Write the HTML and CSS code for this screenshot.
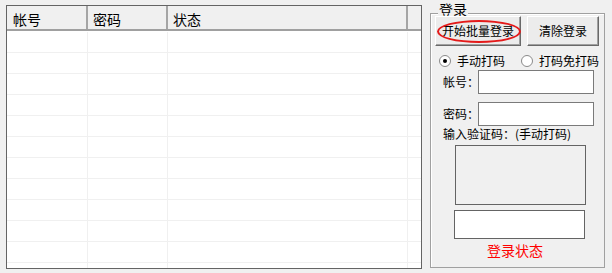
FILE: index.html
```html
<!DOCTYPE html>
<html lang="zh-CN">
<head>
    <meta charset="UTF-8">
    <title>批量登录</title>
    <link rel="stylesheet" href="styles.css">
</head>
<body>
    <div class="window">
        <div class="list">
            <div class="list-head">
                <div class="th c1">帐号</div>
                <div class="th c2">密码</div>
                <div class="th c3">状态</div>
                <div class="th c4"></div>
            </div>
            <div class="list-body">
                <div class="row"><div class="td c1"></div><div class="td c2"></div><div class="td c3"></div><div class="td c4"></div></div>
                <div class="row"><div class="td c1"></div><div class="td c2"></div><div class="td c3"></div><div class="td c4"></div></div>
                <div class="row"><div class="td c1"></div><div class="td c2"></div><div class="td c3"></div><div class="td c4"></div></div>
                <div class="row"><div class="td c1"></div><div class="td c2"></div><div class="td c3"></div><div class="td c4"></div></div>
                <div class="row"><div class="td c1"></div><div class="td c2"></div><div class="td c3"></div><div class="td c4"></div></div>
                <div class="row"><div class="td c1"></div><div class="td c2"></div><div class="td c3"></div><div class="td c4"></div></div>
                <div class="row"><div class="td c1"></div><div class="td c2"></div><div class="td c3"></div><div class="td c4"></div></div>
                <div class="row"><div class="td c1"></div><div class="td c2"></div><div class="td c3"></div><div class="td c4"></div></div>
                <div class="row"><div class="td c1"></div><div class="td c2"></div><div class="td c3"></div><div class="td c4"></div></div>
                <div class="row"><div class="td c1"></div><div class="td c2"></div><div class="td c3"></div><div class="td c4"></div></div>
                <div class="row"><div class="td c1"></div><div class="td c2"></div><div class="td c3"></div><div class="td c4"></div></div>
                <div class="row"><div class="td c1"></div><div class="td c2"></div><div class="td c3"></div><div class="td c4"></div></div>
            </div>
        </div>

        <div class="group">
            <span class="group-title">登录</span>
            <div class="btn-row">
                <button class="btn btn-start">开始批量登录<span class="mark"></span></button>
                <button class="btn btn-clear">清除登录</button>
            </div>
            <div class="radio-row">
                <span class="radio checked"></span><span class="radio-text">手动打码</span>
                <span class="radio second"></span><span class="radio-text">打码免打码</span>
            </div>
            <div class="field">
                <span class="field-label">帐号：</span>
                <div class="input"></div>
            </div>
            <div class="field">
                <span class="field-label">密码：</span>
                <div class="input"></div>
            </div>
            <div class="hint">输入验证码：(手动打码)</div>
            <div class="captcha"></div>
            <div class="status-box"></div>
            <div class="status-text">登录状态</div>
        </div>
    </div>
</body>
</html>
```

FILE: styles.css
```css
body {
    margin: 0;
    background-color: #f0f0f0;
    font-family: "Noto Sans CJK SC", "Liberation Sans", sans-serif;
    font-size: 12px;
    color: #000;
}

.window {
    display: flex;
    align-items: flex-start;
    padding: 5px 0 0 6px;
}

/* list view */
.list {
    box-sizing: border-box;
    width: 416px;
    height: 264px;
    border: 1px solid #646464;
    background-color: #fff;
    overflow: hidden;
}

.list-head {
    display: flex;
    height: 23px;
    background-color: #f0f0f0;
    border-bottom: 2px solid #a0a0a0;
}

.th {
    box-sizing: border-box;
    height: 23px;
    padding: 4px 0 0 5px;
    font-size: 14px;
    line-height: 18px;
    border-right: 2px solid #a5a5a5;
}

.th.c1 {
    padding-left: 6px;
}

.th.c4 {
    border-right: none;
}

.c1 { width: 81px; }
.c2 { width: 80px; }
.c3 { width: 240px; }
.c4 { flex: 1; }

.list-body {
    padding-top: 1px;
}

.row {
    display: flex;
    height: 21px;
    box-sizing: border-box;
    border-bottom: 1px solid #f0f0f0;
}

.td {
    box-sizing: border-box;
    height: 20px;
    border-right: 1px solid #f0f0f0;
}

.td.c4 {
    border-right: none;
}

/* login group */
.group {
    position: relative;
    box-sizing: border-box;
    width: 175px;
    height: 255px;
    margin: 8px 0 0 8px;
    padding: 2px 0 0 4px;
    border: 1px solid #a0a0a0;
    box-shadow: inset 1px 1px 0 #fff;
}

.group-title {
    position: absolute;
    top: -14px;
    left: 7px;
    padding: 0 1px;
    background-color: #f0f0f0;
    font-size: 14px;
    line-height: 18px;
}

.btn-row {
    display: flex;
    gap: 6px;
}

.btn {
    position: relative;
    box-sizing: border-box;
    height: 30px;
    padding: 0;
    font-family: inherit;
    font-size: 12px;
    line-height: 16px;
    color: #000;
    background-color: #ececec;
    border: 1px solid;
    border-color: #fff #696969 #696969 #fff;
    box-shadow: inset -1px -1px 0 #a0a0a0;
}

.btn-start {
    width: 86px;
}

.btn-clear {
    width: 72px;
}

.mark {
    position: absolute;
    top: 3px;
    left: 1px;
    width: 84px;
    height: 23px;
    box-sizing: border-box;
    border: 2px solid #e41a1a;
    border-radius: 50%;
}

.radio-row {
    display: flex;
    align-items: center;
    height: 16px;
    margin: 7px 0 0 4px;
}

.radio {
    box-sizing: border-box;
    width: 12px;
    height: 12px;
    border: 1px solid #8a8a8a;
    border-radius: 50%;
    background-color: #fff;
    position: relative;
}

.radio.checked::after {
    content: "";
    position: absolute;
    top: 3px;
    left: 3px;
    width: 4px;
    height: 4px;
    border-radius: 50%;
    background-color: #000;
}

.radio.second {
    margin-left: 16px;
}

.radio-text {
    margin-left: 6px;
    line-height: 16px;
}

.field {
    display: flex;
    align-items: center;
    margin: 1px 0 0 8px;
}

.field + .field {
    margin-top: 8px;
}

.field-label {
    flex: none;
    width: 35px;
    white-space: nowrap;
    line-height: 16px;
}

.input {
    box-sizing: border-box;
    width: 116px;
    height: 24px;
    background-color: #fff;
    border: 1px solid #7a7a7a;
}

.hint {
    margin: 1px 0 0 8px;
    line-height: 14px;
    white-space: nowrap;
}

.captcha {
    box-sizing: border-box;
    width: 131px;
    height: 60px;
    margin: 4px 0 0 20px;
    border: 1px solid #646464;
    background-color: #f0f0f0;
}

.status-box {
    box-sizing: border-box;
    width: 131px;
    height: 29px;
    margin: 5px 0 0 19px;
    border: 1px solid #646464;
    background-color: #fff;
}

.status-text {
    margin: 2px 0 0 52px;
    font-size: 14px;
    line-height: 18px;
    color: #ff0000;
}
```
